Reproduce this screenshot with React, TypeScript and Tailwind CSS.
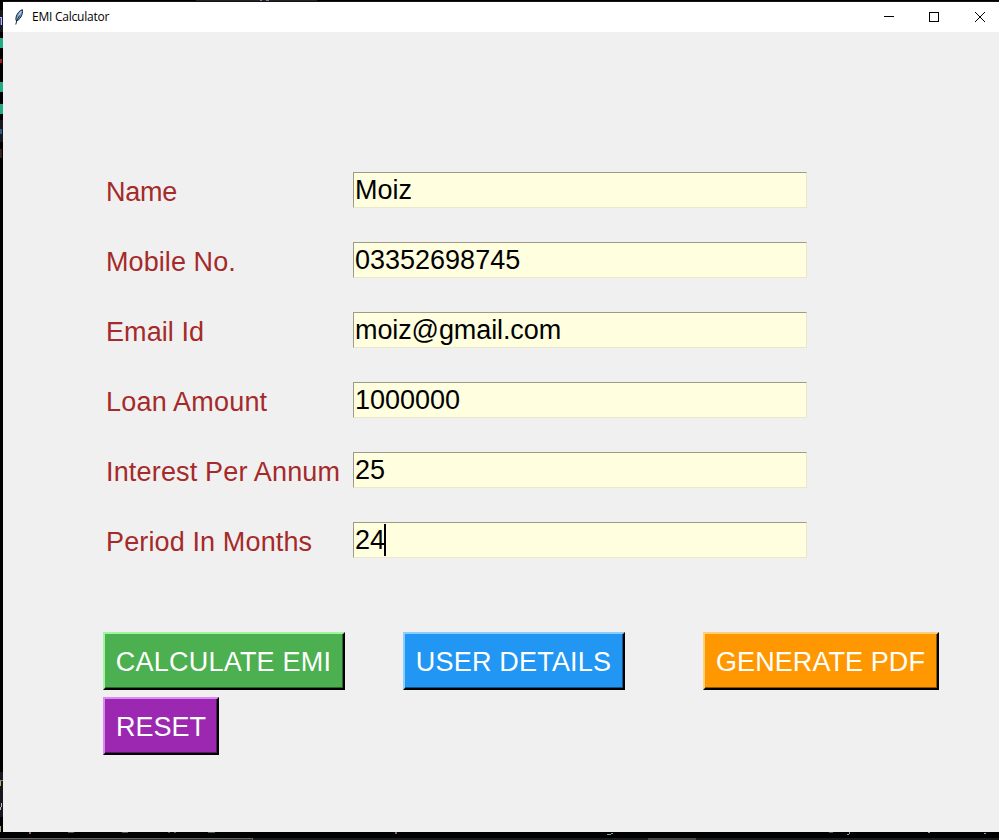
import React from "react";

const fields = [
  { label: "Name", value: "Moiz", focused: false, labelTracking: "tracking-[-0.25px]", valueTracking: "tracking-normal" },
  { label: "Mobile No.", value: "03352698745", focused: false, labelTracking: "tracking-[0.08px]", valueTracking: "tracking-normal" },
  { label: "Email Id", value: "moiz@gmail.com", focused: false, labelTracking: "tracking-[0.08px]", valueTracking: "tracking-[-0.1px]" },
  { label: "Loan Amount", value: "1000000", focused: false, labelTracking: "tracking-[0.2px]", valueTracking: "tracking-normal" },
  { label: "Interest Per Annum", value: "25", focused: false, labelTracking: "tracking-[0.17px]", valueTracking: "tracking-normal" },
  { label: "Period In Months", value: "24", focused: true, labelTracking: "tracking-[0.13px]", valueTracking: "tracking-normal" },
];

function Feather() {
  return (
    <svg width="10" height="16" viewBox="0 0 10 16" className="block">
      <path d="M8.300 .7C5.500 1.400 3 4.600 2.100 8c-.4 1.600-.2 3 .3 4 2.600-.8 5.200-4 5.900-7.500 .3-1.700 .3-3 0-3.800Z" fill="#6d9fdb" stroke="#10151f" strokeWidth=".9" />
      <path d="M7.400 2.200C5.500 4.500 4 8 3.300 10.500" fill="none" stroke="#c6def6" strokeWidth="1" />
      <path d="M5.500 6.500 2.800 11.500 1.800 15.500" fill="none" stroke="#10151f" strokeWidth=".9" />
    </svg>
  );
}

function TitleBar() {
  return (
    <header className="flex h-[30px] items-center bg-white pr-[14px] pl-[11px]">
      <Feather />
      <h1 className="ml-2 font-['Open_Sans','Noto_Sans',sans-serif] text-[12px] leading-[16px] tracking-[-0.23px] text-black">EMI Calculator</h1>
      <div className="ml-auto flex items-center">
        <button aria-label="Minimize">
          <svg className="block" width="10" height="10" viewBox="0 0 10 10" shapeRendering="crispEdges"><path d="M0 4.500H10" stroke="#000" /></svg>
        </button>
        <button aria-label="Maximize" className="ml-[35px]">
          <svg className="block" width="10" height="10" viewBox="0 0 10 10" shapeRendering="crispEdges"><path d="M.5 .5H9.500V9.500H.5Z" fill="none" stroke="#000" /></svg>
        </button>
        <button aria-label="Close" className="ml-9">
          <svg className="block" width="10" height="10" viewBox="0 0 10 10"><path d="M0 0 10 10M10 0 0 10" stroke="#000" strokeWidth="1" /></svg>
        </button>
      </div>
    </header>
  );
}

function ActionButton({ text, frame, face }: { text: string; frame: string; face: string }) {
  return (
    <button className={`h-[58px] border-2 border-r-black border-b-black ${frame}`}>
      <span className={`flex h-full items-center justify-center border-r border-b pt-[3px] ${face}`}>{text}</span>
    </button>
  );
}

function LeftEdge() {
  return (
    <svg width="3" height="832" viewBox="0 0 3 832" className="block shrink-0" shapeRendering="crispEdges">
      <path fill="#000" d="M0 0H3V832H0Z" />
      <path fill="#17191f" d="M0 10H3V32H0ZM0 120H3V142H0ZM0 772H3V817H0Z" />
      <path fill="#bcbcf0" d="M0 17H2V25H0Z" />
      <path fill="#4545a0" d="M0 18H1V25H0Z" />
      <path fill="#20ad86" d="M0 38H3V48H0ZM0 82H3V92H0ZM0 104H3V114H0Z" />
      <path fill="#a91c20" d="M0 59H2V63H0Z" />
      <path fill="#285d88" d="M0 129H2V134H0Z" />
      <path fill="#382418" d="M0 149H2V158H0Z" />
      <path fill="#c9a360" d="M0 780H1V786H0Z" />
      <path fill="#7d8794" d="M0 780H3V781H0Z" />
      <path fill="#b8b8d5" d="M1 803H2V807H1ZM0 807H1V810H0Z" />
      <path fill="#9aa781" d="M0 826H1V832H0Z" />
    </svg>
  );
}

function BottomEdge() {
  return (
    <svg width="999" height="8" viewBox="0 0 999 8" className="block" shapeRendering="crispEdges">
      <path fill="#000" d="M0 0H999V8H0Z" />
      <path fill="#181a1b" d="M253 6H999V8H253Z" />
      <path fill="#666" d="M0 6H253V7H0ZM252 7H253V8H252Z" />
      <path fill="#303030" d="M0 7H252V8H0Z" />
      <path fill="#484848" d="M648 6H696V8H648Z" />
      <path fill="#455a60" d="M68 0H74V1H68ZM122 0H128V1H122ZM168 0H170V1H168ZM174 0H176V1H174ZM208 0H215V1H208ZM829 0H833V1H829Z" />
      <path fill="#607caf" d="M29 0H30V2H29ZM395 0H396V2H395Z" />
      <path fill="#b04c38" d="M30 0H31V2H30ZM396 0H397V2H396Z" />
      <path fill="#7ba4b4" d="M607 2H611V3H607ZM611 1H613V2H611ZM847 2H849V3H847ZM849 0H850V2H849ZM928 0H930V1H928ZM984 1H986V2H984Z" />
    </svg>
  );
}

export default function App() {
  return (
    <div className="h-[840px] w-[999px] overflow-hidden bg-black">
      <div className="flex">
        <LeftEdge />
        <main className="h-[832px] w-[996px] bg-[#f0f0f0] font-['Liberation_Sans',Arial,sans-serif] text-[27px] leading-[31px]">
          <svg width="996" height="2" viewBox="0 0 996 2" className="block" shapeRendering="crispEdges">
            <path fill="#000" d="M0 0H996V2H0Z" />
            <path fill="#202328" d="M193 0H314V1H193Z" />
            <path fill="#738496" d="M257 0H259V1H257ZM263 0H266V1H263Z" />
            <path fill="#171113" d="M0 1H996V2H0Z" />
          </svg>
          <TitleBar />
          <form className="pt-[140px] pl-[100px]" onSubmit={(e) => e.preventDefault()}>
            <div className="flex flex-col gap-[34px]">
              {fields.map((field) => (
                <div key={field.label} className="flex h-9 items-center">
                  <label className={`w-[250px] pt-[5px] pl-[3px] whitespace-nowrap text-[#a52a2a] ${field.labelTracking}`}>{field.label}</label>
                  <div className="flex h-9 w-[454px] items-center border border-t-[#9c9b87] border-r-[#e8e7cb] border-b-[#e8e7cb] border-l-[#9c9b87] bg-[#ffffe0] pl-px text-black">
                    <span className={`pt-px ${field.valueTracking}`}>{field.value}</span>
                    {field.focused && <span className="-ml-px h-8 w-0.5 bg-black" />}
                  </div>
                </div>
              ))}
            </div>
            <div className="mt-[74px] grid w-[860px] grid-cols-[300px_300px_236px] gap-y-[7px] text-white">
              <div className="grid w-[242px] tracking-[0.22px]"><ActionButton text="CALCULATE EMI" frame="border-t-[#a0f59f] border-l-[#a0f59f]" face="border-[#2b632d] bg-[#4caf50]" /></div>
              <div className="grid w-[222px] tracking-[0.2px]"><ActionButton text="USER DETAILS" frame="border-t-[#88ceff] border-l-[#88ceff]" face="border-[#135489] bg-[#2196f3]" /></div>
              <div className="grid w-[236px] tracking-[0.08px]"><ActionButton text="GENERATE PDF" frame="border-t-[#ffd078] border-l-[#ffd078]" face="border-[#905600] bg-[#ff9800]" /></div>
              <div className="grid w-[116px]"><ActionButton text="RESET" frame="border-t-[#d98bf2] border-l-[#d98bf2]" face="border-[#581663] bg-[#9c27b0] pl-px" /></div>
            </div>
          </form>
        </main>
      </div>
      <BottomEdge />
    </div>
  );
}
